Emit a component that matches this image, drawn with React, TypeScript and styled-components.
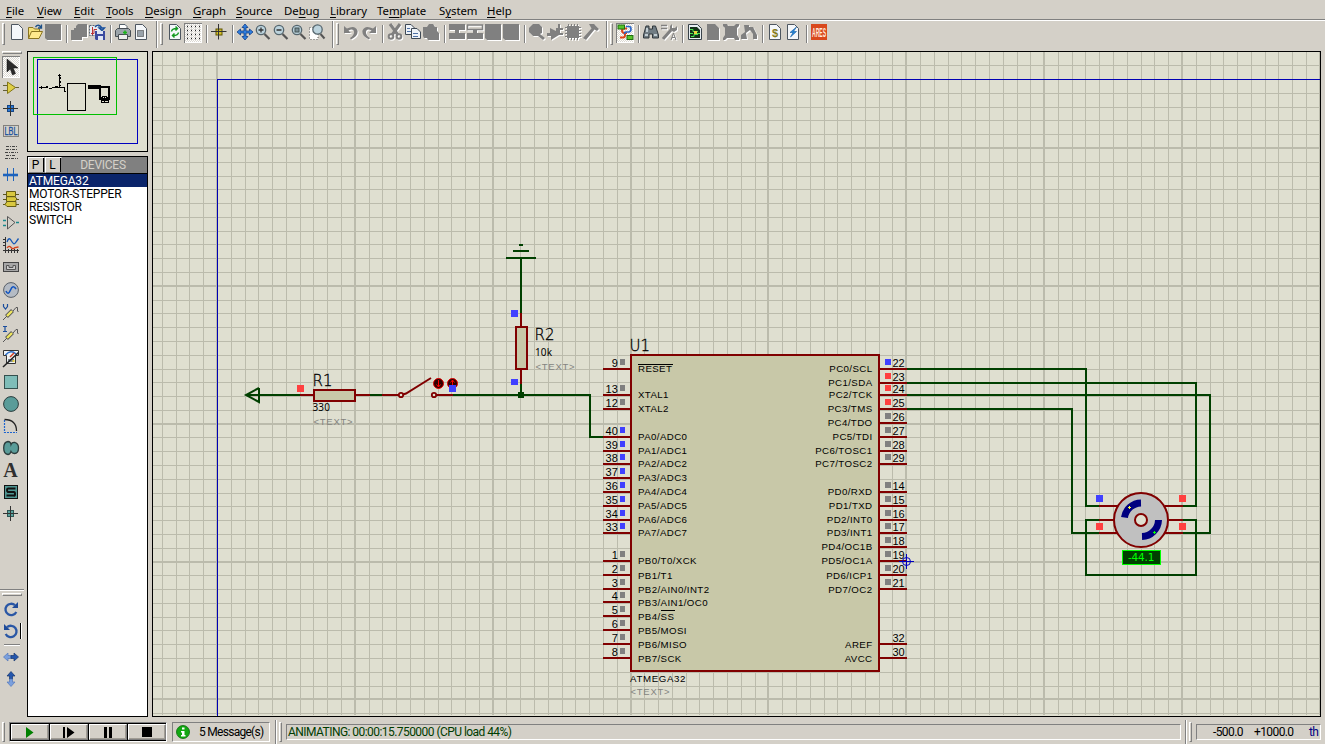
import React from "react";
import styled, { createGlobalStyle } from "styled-components";

const FACE = "#d4d0c8";
const PAPER = "#dfdfd0";
const GRID = "#bbbbac";
const WIRE = "#004000";
const PART = "#800000";
const FRAME = "#0000b4";
const UI = '"Roboto", "Liberation Sans", sans-serif';

const Global = createGlobalStyle`
  * { box-sizing: border-box; }
  body { margin: 0; background: ${FACE}; overflow: hidden; }
`;

const Window = styled.div`
  width: 1325px;
  height: 744px;
  display: grid;
  grid-template-rows: 19px 32px 666px 27px;
  background: ${FACE};
  color: #000;
`;

/* ---------- menu ---------- */

const MenuBar = styled.nav`
  display: flex;
  padding-left: 6px;
  font: 11.4px/22px "Noto Sans", "DejaVu Sans", sans-serif;
  color: #000;
`;
const MenuItem = styled.span<{ $w: number }>`
  width: ${(p) => p.$w}px;
  flex: none;
  white-space: nowrap;
  letter-spacing: -0.05px;
  u { text-underline-offset: 2px; }
`;
const menus: [string, string, string, number][] = [
  ["", "F", "ile", 31], ["", "V", "iew", 37], ["", "E", "dit", 32], ["", "T", "ools", 39],
  ["", "D", "esign", 48], ["", "G", "raph", 43], ["", "S", "ource", 48], ["De", "b", "ug", 46],
  ["", "L", "ibrary", 47], ["Te", "m", "plate", 62], ["S", "y", "stem", 48], ["", "H", "elp", 40],
];

/* ---------- toolbars ---------- */

const TopBar = styled.div`
  display: flex;
  align-items: flex-start;
  border-top: 1px solid #808080;
  box-shadow: inset 0 1px 0 #fff;
  padding-left: 2px;
`;
const Slot = styled.span<{ $on?: boolean }>`
  width: 18px;
  height: 20px;
  margin-top: 3px;
  padding-bottom: 2px;
  flex: none;
  display: flex;
  align-items: center;
  justify-content: center;
  background: ${(p) => (p.$on ? "repeating-conic-gradient(#fff 0 25%, #dcd9d2 0 50%) 0 0 / 2px 2px" : "none")};
  box-shadow: ${(p) => (p.$on ? "inset 1px 1px 0 #808080, inset -1px -1px 0 #fff" : "none")};
`;
const Divider = styled.i`
  width: 2px;
  height: 18px;
  margin: 5px 2px 0 4px;
  flex: none;
  background: linear-gradient(90deg, #808080 50%, #fff 50%);
`;
const BandEnd = styled.i`
  width: 2px;
  height: 27px;
  margin: 1px 2px 0 6px;
  flex: none;
  background: linear-gradient(90deg, #808080 50%, #fff 50%);
`;
const Grip = styled.i<{ $gap: number }>`
  width: 3px;
  height: 22px;
  margin: 3px ${(p) => p.$gap}px 0 0;
  flex: none;
  border: solid;
  border-width: 1px;
  border-color: #fff #808080 #808080 #fff;
`;
const Svg = styled.svg<{ $dim?: boolean }>`
  display: block;
  flex: none;
  filter: ${(p) => (p.$dim ? "drop-shadow(1px 1px 0 #fff)" : "none")};
`;

const G = "#808080";
const page = <path d="M2.500 .5H9.500L13.500 4.500V15.500H2.500Z" fill="#f4f7fa" stroke="#4d5660" />;
const lens = (
  <>
    <path d="M9.500 10L14.500 15" stroke="#555" strokeWidth="2.200" />
    <circle cx="6" cy="6" r="4.700" fill="#bcd3dd" stroke="#56666e" strokeWidth="1.300" />
  </>
);
const probe = (
  <>
    <path d="M0 16L4 12M10 7L13 3.500H14.500V7L15.500 8" fill="none" stroke="#555" />
    <path d="M3.500 12.500L9.500 6.500" stroke="#555" strokeWidth="4" />
    <path d="M4 12L9 7" stroke="#f0e860" strokeWidth="2.400" />
  </>
);

const glyphs: Record<string, React.ReactNode> = {
  new: page,
  open: (
    <>
      <path d="M1.500 14.500V3.500H6L7.500 5H12.500V8" fill="#f6e27a" stroke="#8a7420" />
      <path d="M1.500 14.500L4.500 7.500H15.500L12 14.500Z" fill="#ffe98c" stroke="#8a7420" />
      <path d="M8.500 3Q11 -.5 14 3M14.500 .5V4H11" fill="none" stroke="#1d5087" strokeWidth="1.300" />
    </>
  ),
  block: <path d="M0 0H16V16H2L0 14Z" fill={G} />,
  import: <path d="M5 2L7 0H16V13H11V16H0V6H3V4H5Z" fill={G} />,
  export: (
    <>
      <path d="M.5 1.500H9L12 5V11.500H.500Z" fill="#e7edf3" stroke="#596472" strokeDasharray="2 1" />
      <path d="M2 9.500H5V5.500H8M3.500 3V11" stroke="#b33" fill="none" />
      <path d="M6 3Q10 -1 13 4M10 4H15.500L13 6.500Z" fill="none" stroke="#174e9d" strokeWidth="1.300" />
      <path d="M6 7H16V16H7L6 15Z" fill="#3b4a9f" />
      <path d="M8 7H14V10H8ZM9 12H14V16H9Z" fill="#dfe5f4" />
    </>
  ),
  print: (
    <>
      <path d="M4.500 6V.500H10L12 2.500V6" fill="#fff" stroke="#54606a" />
      <path d="M.5 6.500L2.500 4.500H13.500L15.500 6.500V12.500H.500Z" fill="#9ba4aa" stroke="#484f54" />
      <path d="M3.500 10.500H12.500V15.500H3.500Z" fill="#eee" stroke="#484f54" />
      <path d="M8 8.500H12M10 6.500V10.500" stroke="#19b419" strokeWidth="1.500" />
    </>
  ),
  area: (
    <>
      {page}
      <rect x="4.500" y="6.500" width="6" height="6" fill="#98a2aa" stroke="#333" strokeDasharray="1 1" />
    </>
  ),
  refresh: (
    <>
      {page}
      <path d="M4.500 7.500Q5 4.500 9.500 4.500M8.500 2.500L10.500 4.500L8.500 6.500M11.500 8.500Q11 11.500 6.500 11.500M7.500 9.500L5.500 11.500L7.500 13.500" fill="none" stroke="#149a22" strokeWidth="1.500" />
    </>
  ),
  grid: (
    <path d="M2 2.500H16M2 6.500H16M2 10.500H16M2 14.500H16" stroke="#222" strokeDasharray="1 3" strokeWidth="1.300" />
  ),
  origin: (
    <>
      <rect x="5" y="5" width="6" height="6" fill="#d3bf2a" stroke="#5c5200" />
      <path d="M7.500 0V15.500M0 7.500H15.500" stroke="#333" />
    </>
  ),
  pan: (
    <path
      d="M8 0L11 3.500H9V7H12.500V5L16 8L12.500 11V9H9V12.500H11L8 16L5 12.500H7V9H3.500V11L0 8L3.500 5V7H7V3.500H5Z"
      fill="#2f7fe0" stroke="#133f86" strokeWidth=".8"
    />
  ),
  zin: <>{lens}<path d="M3.500 6H8.500M6 3.500V8.500" stroke="#333" strokeWidth="1.300" /></>,
  zout: <>{lens}<path d="M3.500 6H8.500" stroke="#333" strokeWidth="1.500" /></>,
  zall: <>{lens}<rect x="4" y="4" width="4" height="4" fill="#7b8e97" stroke="#455" /></>,
  zarea: (
    <>
      <path d="M.5 3.500H9V15.500H.500Z" fill="#fff" stroke="#555" strokeDasharray="1 2" />
      <path d="M11.500 10L15.500 14.500" stroke="#555" strokeWidth="2" />
      <circle cx="8.500" cy="5.500" r="4.700" fill="#bcd3dd" stroke="#56666e" strokeWidth="1.300" />
    </>
  ),
  undo: <path d="M1 2V9H8L5.500 6.500Q10 4 11 7.500Q11.500 11 7 14L8 15.500Q15.500 12 14.500 6.500Q12 .500 4 4.500Z" fill={G} />,
  redo: <path d="M15 2V9H8L10.500 6.500Q6 4 5 7.500Q4.500 11 9 14L8 15.500Q.5 12 1.500 6.500Q4 .500 12 4.500Z" fill={G} />,
  cut: (
    <>
      <path d="M3 0L11 11M13 0L5 11" stroke={G} strokeWidth="3" />
      <circle cx="4" cy="12.500" r="2.300" fill="none" stroke={G} strokeWidth="2" />
      <circle cx="12" cy="12.500" r="2.300" fill="none" stroke={G} strokeWidth="2" />
    </>
  ),
  copy: (
    <>
      <path d="M.5 .5H6L9.500 4V10.500H.500Z" fill="#eef3f8" stroke="#3f4954" />
      <path d="M6.500 4.500H12L15.500 8V14.500H6.500Z" fill="#eef3f8" stroke="#3f4954" />
      <path d="M2 4.500H5M2 7.500H6M8 9.500H13M8 12.500H13" stroke="#4d70a5" />
    </>
  ),
  paste: <path d="M0 3H4L6 0H10L12 3H14V7L16 9V16H5L4 14H1L0 12Z" fill={G} />,
  bcopy: <path d="M0 0H16V6H10V9H16V15H0V9H6V6H0Z" fill={G} />,
  bmove: (
    <>
      <path d="M0 9H6V6H10V9H16V15H0Z" fill={G} />
      <path d="M.5 1H15.500V5.500H.500Z" fill="none" stroke={G} strokeWidth="1.500" />
    </>
  ),
  pick: <path d="M4 0H10L13 3V9L11 10L16 14L14 16L9 12H4L0 8V4Z" fill={G} />,
  make: <path d="M0 9H3V4L9 7V4H11V0H13V4H16V6H13V9H16V11H12L4 16V12H0Z" fill={G} />,
  pack: (
    <>
      <rect x="2" y="2" width="12" height="12" fill={G} />
      <path d="M3.500 0V16M6.500 0V16M9.500 0V16M12.500 0V16M0 3.500H16M0 6.500H16M0 9.500H16M0 12.500H16" stroke={G} />
    </>
  ),
  hammer: <path d="M6 0H11L16 5L14 7L11.500 5.500L3 16L0 14L8.500 4.500Z" fill={G} />,
  wire: (
    <>
      <path d="M10 4.500H7Q5 4.500 5 6.500T7 9H10M3 13.500H6Q8 13.500 8 11V8" fill="none" stroke="#e0451c" strokeWidth="2" />
      <path d="M9 2.500H12Q14 2.500 14 5T12 8H9Q7.500 8 7.500 10" fill="none" stroke="#2b66c9" strokeWidth="1.600" />
      <rect x="1" y="1" width="6.500" height="4" fill="#57c62d" stroke="#216d12" />
      <rect x="10" y="11.500" width="6" height="4" fill="#57c62d" stroke="#216d12" />
    </>
  ),
  find: (
    <>
      <path d="M3 2H6V5H9.500V2H12.500L15.500 11V14H9.500V10H6V14H.500V11Z" fill="#707c83" stroke="#30383d" />
      <path d="M2 11H5M11 11H14M4 4V8" stroke="#dbe6ec" strokeWidth="1.500" />
    </>
  ),
  prop: (
    <>
      <path d="M0 1.500H6M0 4.500H6" stroke={G} strokeWidth="1.500" />
      <path d="M2 15L10 6" stroke={G} strokeWidth="3" />
      <path d="M9 6V2L11 0V4H14L16 2V6L13 8Z" fill={G} />
      <path d="M10 16L12.500 9L15 16M11 13.500H14" stroke={G} fill="none" />
    </>
  ),
  sheet: (
    <>
      <path d="M1.500 .5H10.500L14.500 4.500V15.500H1.500Z" fill="#e8eef2" stroke="#39424a" />
      <path d="M3 3H10L13 6V14H3Z" fill="#14301a" />
      <path d="M3 5.500H6V7.500H11M3 9.500H6M10 9.500H13M4 12.500H7V10.500H11" stroke="#49e04e" fill="none" />
      <rect x="7" y="7" width="3" height="3" fill="#ead33f" />
    </>
  ),
  gpage: <path d="M2 0H10L14 4V16H2Z" fill={G} />,
  gx: <path d="M0 0H4L5 2H11L13 0H16V2L14 4V11L16 14V16H12L11 14H4L2 16H0V14L2 11V4L0 2Z" fill={G} />,
  tree: <path d="M3 1H8V3H12L16 11V15H12V10L9 6L5 9L6 15H0V11L4 8Z" fill={G} />,
  bill: page,
  erc: (
    <>
      {page}
      <path d="M11.500 3L5 8.500H8L5.500 13L11.500 7.500H8.500Z" fill="#2589de" stroke="#125b9f" strokeWidth=".6" />
    </>
  ),

  select: <path d="M4 0L4 13L7.300 10L9.500 16L12.500 14.600L10.200 9H15Z" fill="#2a2a2a" stroke="#111" strokeWidth=".5" />,
  gate: (
    <>
      <path d="M0 5.500H4M0 10.500H4M12 7.500H16" stroke="#656038" />
      <path d="M4.500 2L12.500 7.500L4.500 13.500Z" fill="#e0cf45" stroke="#837618" />
    </>
  ),
  junction: (
    <>
      <rect x="4.500" y="4.500" width="6" height="6" fill="#2c79d8" stroke="#174785" />
      <path d="M7.500 0V15M0 7.500H15" stroke="#333" />
    </>
  ),
  label: <rect x=".5" y="2.500" width="15" height="11" fill="none" stroke="#333" strokeDasharray="1 1" />,
  script: <path d="M3 1.500H14M3 4.500H14M2 7.500H15M3 10.500H13M2 13.500H15" stroke="#444" strokeWidth="1.200" strokeDasharray="3 1 1 1" />,
  bus: (
    <>
      <path d="M4.500 1V14M10.500 1V14" stroke="#1d63bd" />
      <path d="M0 8H15" stroke="#1d63bd" strokeWidth="2.600" />
    </>
  ),
  sub: (
    <>
      <path d="M0 3.500H16M0 8.500H16M0 13.500H16" stroke="#5b561e" />
      <path d="M3.500 .5H12.500V5.500H3.500ZM3.500 5.700H12L14 8L12 10.500H3.500ZM4 10.500H13V15.500H4L2 13.500Z" fill="#d9c83f" stroke="#665d14" />
    </>
  ),
  pin: (
    <>
      <path d="M0 5.500H3M0 10.500H3M13 7.500H16" stroke="#17888c" strokeWidth="1.300" />
      <path d="M4.500 1.500L12 7.500L4.500 14Z" fill="none" stroke="#555" />
    </>
  ),
  graph: (
    <>
      <path d="M2.500 0V16M0 13.500H16M0 2.500H3M0 5.500H3M0 8.500H3M5.500 12V16M8.500 12V16M11.500 12V16M14.500 12V16" stroke="#333" />
      <path d="M4 5Q6 -1 8.500 4T13 5L15.500 1.500" fill="none" stroke="#1557b5" strokeWidth="1.300" />
      <path d="M4 11Q6 8 8 10.500T12 10.500L15.500 10" fill="none" stroke="#d3421b" strokeWidth="1.300" />
    </>
  ),
  tape: (
    <>
      <rect x=".5" y="3.500" width="15" height="9" fill="#a7a7a7" stroke="#444" />
      <path d="M3.500 10.500V6.500H6V8.500H10V6.500H12.500V10.500Z" fill="#ccc" stroke="#555" />
    </>
  ),
  gen: (
    <>
      <circle cx="8" cy="8" r="7.400" fill="#b4bbc4" stroke="#596068" />
      <path d="M3 9Q5 14 7.500 8T13 7" fill="none" stroke="#1456c0" strokeWidth="1.600" />
    </>
  ),
  probeV: <>{probe}<path d="M.5 0V2.500L2.500 5L4.500 2.500V0" fill="none" stroke="#1a4d9c" strokeWidth="1.200" /></>,
  probeI: <>{probe}<path d="M0 .5H4M2 .5V5.500M0 5.500H4" fill="none" stroke="#1a4d9c" strokeWidth="1.200" /></>,
  meter: (
    <>
      <path d="M.5 .5H15.500V5.500H12.500V13.500H3.500V5.500H.500Z" fill="#eef2f4" stroke="#333" />
      <path d="M2.500 5Q8 -1 13 4" fill="none" stroke="#2b6ec8" strokeWidth="1.500" />
      <path d="M7 7L11 3" stroke="#d33b1b" strokeWidth="1.500" />
      <path d="M5 9H11V12H5Z" fill="#77858c" />
      <path d="M0 17L15.500 2.500" stroke="#222" strokeWidth="1.600" />
      <rect x="9.500" y="10" width="2" height="2" fill="#e8cf3c" />
    </>
  ),
  box: <rect x="1.500" y="1.500" width="13" height="13" fill="#7fbdb8" stroke="#35504e" />,
  circle: <circle cx="8" cy="8" r="7.400" fill="#5a9c99" stroke="#2c3c3c" />,
  arc: (
    <>
      <path d="M1.500 2V14.500H14" fill="none" stroke="#1e65cf" strokeWidth="1.200" strokeDasharray="2 1" />
      <path d="M1.500 1.500Q13.500 1.500 13.500 13" fill="none" stroke="#222" strokeWidth="1.300" />
    </>
  ),
  blob: <path d="M5 1.500Q7.500 1.500 8 4.500Q9 2 12 2.500Q15.500 3.500 15.500 8Q15.500 13.500 11.500 13.500Q9 13.500 8 11.500Q7 14.500 5 14.500Q.7 14 .7 8Q.7 2 5 1.500Z" fill="#5a9c99" stroke="#2c3c3c" strokeWidth="1.300" />,
  letter: null,
  symbol: (
    <>
      <rect x="1.500" y="1.500" width="13" height="13" fill="#4f9692" stroke="#111" />
      <path d="M12.500 4.500H5Q4 4.500 4 6T5 8H11Q12 8 12 10T11 11.500H3.500" fill="none" stroke="#111" strokeWidth="2" />
    </>
  ),
  marker: (
    <>
      <rect x="4.500" y="4.500" width="6" height="6" fill="#5aa39f" stroke="#2d5654" />
      <path d="M7.500 0V15M0 7.500H15" stroke="#333" />
    </>
  ),
  cw: (
    <>
      <path d="M12 4.200A5.700 5.700 0 1 0 13.300 11" fill="none" stroke="#2a57a5" strokeWidth="2.300" />
      <path d="M9 7H15V1Z" fill="#1f4b99" />
    </>
  ),
  ccw: (
    <>
      <path d="M4 4.200A5.700 5.700 0 1 1 2.700 11" fill="none" stroke="#2a57a5" strokeWidth="2.300" />
      <path d="M7 7H1V1Z" fill="#1f4b99" />
    </>
  ),
  mirH: (
    <>
      <path d="M8 6.500H5V4L.5 8L5 12V9.500H8Z" fill="#7ba0dd" stroke="#5479bb" strokeWidth=".7" />
      <path d="M8 6.500H11V4L15.500 8L11 12V9.500H8Z" fill="#2456ad" stroke="#17366e" strokeWidth=".7" />
    </>
  ),
  mirV: (
    <>
      <path d="M6.500 8V5H4L8 .5L12 5H9.500V8Z" fill="#2456ad" stroke="#17366e" strokeWidth=".7" />
      <path d="M6.500 8V11H4L8 15.500L12 11H9.500V8Z" fill="#7ba0dd" stroke="#5479bb" strokeWidth=".7" />
    </>
  ),
};

const IconText = styled.text<{ $serif?: boolean }>`
  font-family: ${(p) => (p.$serif ? '"Liberation Serif", serif' : '"Liberation Sans", sans-serif')};
`;

const Icon = ({ name, dim }: { name: string; dim?: boolean }) => (
  <Svg width="16" height="16" viewBox="0 0 16 16" $dim={dim} overflow="visible">
    {glyphs[name]}
    {name === "label" && (
      <IconText x="1.500" y="12" fontSize="10.500" textLength="13" lengthAdjust="spacingAndGlyphs" fill="#174f9c" stroke="#174f9c" strokeWidth=".3">LBL</IconText>
    )}
    {name === "bill" && <IconText x="5" y="12.500" fontSize="11" fontWeight="700" fill="#857b18">$</IconText>}
    {name === "letter" && (
      <IconText $serif x="7.500" y="14.500" fontSize="20" fontWeight="700" fill="#2f2f2f" textAnchor="middle">A</IconText>
    )}
    {name === "ares" && (
      <>
        <rect width="16" height="16" fill="#d9481c" />
        <IconText x="1" y="12.500" fontSize="13" fontWeight="700" textLength="14" lengthAdjust="spacingAndGlyphs" fill="#ffe9dc">ARES</IconText>
      </>
    )}
  </Svg>
);

const topItems =
  "new open -block | -import export | print area # refresh +grid | origin | pan zin zout zall zarea # -undo -redo | -cut copy -paste | -bcopy -bmove -block -block | -pick -make -pack -hammer # +wire | find -prop | sheet -gpage -gx -tree | bill erc | ares".split(" ");

const Main = styled.main`
  display: grid;
  grid-template-columns: 27px 121px 1173px;
`;
const Side = styled.aside`
  display: flex;
  flex-direction: column;
  justify-content: space-between;
  height: 639px;
`;
const SideGroup = styled.div<{ $line?: boolean }>`
  width: 24px;
  display: flex;
  flex-direction: column;
  align-items: flex-start;
  padding: ${(p) => (p.$line ? "3px" : "0")} 0 0 2px;
  border-top: ${(p) => (p.$line ? "1px solid #808080" : "0")};
  box-shadow: ${(p) => (p.$line ? "inset 0 1px 0 #fff" : "none")};
`;
const SideGrip = styled.i`
  width: 20px;
  height: 3px;
  flex: none;
  border: 1px solid;
  border-color: #fff #808080 #808080 #fff;
`;
const Tool = styled.span<{ $gap: number; $on?: boolean }>`
  width: 18px;
  height: 22px;
  margin-top: ${(p) => p.$gap}px;
  flex: none;
  display: flex;
  align-items: center;
  justify-content: center;
  background: ${(p) => (p.$on ? "repeating-conic-gradient(#fff 0 25%, #dcd9d2 0 50%) 0 0 / 2px 2px" : "none")};
  box-shadow: ${(p) => (p.$on ? "inset 1px 1px 0 #808080, inset -1px -1px 0 #fff" : "none")};
`;
const AngleRow = styled.div`
  display: flex;
  align-items: center;
`;
const AngleEdge = styled.i`
  width: 2px;
  height: 16px;
  border-left: 1px solid #000;
  border-right: 1px solid #fff;
`;
const SideRule = styled.i`
  width: 16px;
  height: 2px;
  margin: 2px 0 0 2px;
  background: linear-gradient(#808080 50%, #fff 50%);
`;
const sideTools: [string, number][] = [
  ["select", 2], ["gate", -1], ["junction", -1], ["label", 0], ["script", 0], ["bus", 0], ["sub", 2],
  ["pin", 2], ["graph", 0], ["tape", 0], ["gen", 1], ["probeV", 0], ["probeI", 0], ["meter", 2],
  ["box", 2], ["circle", 0], ["arc", 0], ["blob", 0], ["letter", 0], ["symbol", 0], ["marker", 0],
];

/* ---------- left panel ---------- */

const Panel = styled.section`
  display: grid;
  grid-template-rows: 101px 561px;
  row-gap: 4px;
`;
const Overview = styled.div`
  border: 1px solid #000;
  background: ${PAPER};
`;
const Devices = styled.div`
  border: 1px solid #000;
  background: #fff;
  font: 12px/13px ${UI};
`;
const DevHead = styled.div`
  display: flex;
  height: 17px;
  border-bottom: 1px solid #000;
`;
const DevButton = styled.button`
  width: 17px;
  height: 16px;
  padding: 0 2px 0 0;
  flex: none;
  background: ${FACE};
  border: 1px solid;
  border-color: #fff #808080 #808080 #fff;
  box-shadow: inset -1px 0 0 #000;
  font: 12px/15px ${UI};
  color: #000;
`;
const DevTitle = styled.div`
  flex: 1;
  padding-right: 3px;
  background: #808080;
  color: ${FACE};
  text-align: center;
  line-height: 17px;
  letter-spacing: -0.25px;
`;
const Row = styled.div<{ $sel?: boolean }>`
  height: 13px;
  padding-left: 1px;
  line-height: 15px;
  letter-spacing: -0.2px;
  background: ${(p) => (p.$sel ? "#0a246a" : "transparent")};
  color: ${(p) => (p.$sel ? "#fff" : "#000")};
`;

/* ---------- schematic ---------- */

const Sheet = styled.div`
  margin-left: 4px;
  border: 1px solid #000;
  background: ${PAPER};
  overflow: hidden;
`;
const Lbl = styled.text<{ $wide?: boolean }>`
  font: 9.700px "Liberation Sans", sans-serif;
  letter-spacing: ${(p) => (p.$wide ? 0.65 : 0.4)}px;
  fill: #000;
`;
const PinNo = styled.text`
  font: 11px "Liberation Sans", sans-serif;
  fill: #000;
`;
const Ref = styled.text`
  font: 200 15px "DejaVu Sans Light", "DejaVu Sans", sans-serif;
  fill: #000;
  stroke: #000;
  stroke-width: 0.3px;
`;
const Val = styled.text<{ $lit?: boolean }>`
  font: ${(p) => (p.$lit ? '10.5px "DejaVu Sans"' : '10px "Noto Sans"')}, sans-serif;
  letter-spacing: ${(p) => (p.$lit ? -0.2 : 0.15)}px;
  fill: ${(p) => (p.$lit ? "#00ff00" : "#000")};
`;
const Hint = styled.text`
  font: 9.500px "Liberation Sans", sans-serif;
  letter-spacing: 0.75px;
  fill: #848480;
`;

const BLUE = "#4040ff";
const RED = "#ff4040";
const NONE = "#808080";
type Pin = [number, string, number, string?];
const leftPins: Pin[] = [
  [9, "RESET", 369, NONE], [13, "XTAL1", 395, NONE], [12, "XTAL2", 409, NONE],
  [40, "PA0/ADC0", 437, BLUE], [39, "PA1/ADC1", 451, BLUE], [38, "PA2/ADC2", 464, BLUE], [37, "PA3/ADC3", 478, BLUE],
  [36, "PA4/ADC4", 492, BLUE], [35, "PA5/ADC5", 506, BLUE], [34, "PA6/ADC6", 520, BLUE], [33, "PA7/ADC7", 533, BLUE],
  [1, "PB0/T0/XCK", 561, NONE], [2, "PB1/T1", 575, NONE], [3, "PB2/AIN0/INT2", 589, NONE], [4, "PB3/AIN1/OC0", 602, NONE],
  [5, "PB4/SS", 616, NONE], [6, "PB5/MOSI", 630, NONE], [7, "PB6/MISO", 644, NONE], [8, "PB7/SCK", 658, NONE],
];
const rightPins: Pin[] = [
  [22, "PC0/SCL", 369, BLUE], [23, "PC1/SDA", 383, RED], [24, "PC2/TCK", 395, RED], [25, "PC3/TMS", 409, RED],
  [26, "PC4/TDO", 423, NONE], [27, "PC5/TDI", 437, NONE], [28, "PC6/TOSC1", 451, NONE], [29, "PC7/TOSC2", 464, NONE],
  [14, "PD0/RXD", 492, NONE], [15, "PD1/TXD", 506, NONE], [16, "PD2/INT0", 520, NONE], [17, "PD3/INT1", 533, NONE],
  [18, "PD4/OC1B", 547, NONE], [19, "PD5/OC1A", 561, NONE], [20, "PD6/ICP1", 575, NONE], [21, "PD7/OC2", 589, NONE],
  [32, "AREF", 644], [30, "AVCC", 658],
];
const labelY = (y: number) => y + (y > 561 ? 4 : 3);

const STEP = 13.785;
const cols = Array.from({ length: 85 }, (_, i) => i - 4);
const rows = Array.from({ length: 48 }, (_, i) => i - 6);

const Sq = ({ x, y, c }: { x: number; y: number; c: string }) => <rect x={x} y={y} width="7" height="7" fill={c} />;

const Schematic = () => (
  <Svg width="1167" height="664" viewBox="153 52 1167 664" shapeRendering="crispEdges">
    {cols.map((k) => {
      const major = k % 10 === 0;
      return <rect key={k} x={Math.round(217 + k * STEP) - (major ? 1 : 0)} y="52" width={major ? 2 : 1} height="663" fill={GRID} />;
    })}
    {rows.map((k) => {
      const major = k % 10 === 0;
      return <rect key={k} x="153" y={Math.round(148 + k * STEP) - (major ? 1 : 0)} width="1166" height={major ? 2 : 1} fill={GRID} />;
    })}
    <path d="M1320 79.500H217.500V716" fill="none" stroke={FRAME} />

    <g fill="none" stroke={WIRE} strokeWidth="2">
      <path d="M259 388V402L246 395L259 388M246 395H300M370 395H382M453 395H590V437H603" shapeRendering="geometricPrecision" />
      <path d="M519 245H523M513 251H529M506 258H536M521 258V313M521 384V395" />
      <path d="M907 369H1086V506H1099M907 383H1196V506H1183M907 395H1210V533H1183M907 409H1072V533H1099M1099 520H1086V575H1196V520H1183" />
    </g>
    <rect x="518" y="392" width="6" height="6" fill={WIRE} />
    <g fill="none" stroke={PART} strokeWidth="2">
      <path d="M300 395H313M356 395H370M382 395H399M436 395H453M521 313V326M521 370V384" />
      <path d="M1099 506H1118M1099 520H1114M1099 533H1118M1165 506H1183M1169 520H1183M1165 533H1183" />
      <rect x="314" y="390" width="41" height="11" fill="#c8c8a8" />
      <rect x="516" y="327" width="11" height="42" fill="#c8c8a8" />
      <g shapeRendering="auto">
        <circle cx="401" cy="395" r="2.200" strokeWidth="1.800" />
        <circle cx="434" cy="395" r="2.200" strokeWidth="1.800" />
        <path d="M403 394.500L406 393.500L431 378" />
      </g>
    </g>
    {[438.5, 452.500].map((x, i) => (
      <g key={x} shapeRendering="auto">
        <circle cx={x} cy="383.500" r="5" fill="#300000" stroke="#e00000" />
        <path d={i ? `M${x} 387V380M${x - 2} 382.500L${x} 380L${x + 2} 382.500` : `M${x} 380V387M${x - 2} 384.500L${x} 387L${x + 2} 384.500`} stroke="#ff0000" strokeWidth="1" fill="none" />
      </g>
    ))}
    <Sq x={297} y={385} c={RED} />
    <Sq x={449} y={385} c={BLUE} />
    <Sq x={511} y={310} c={BLUE} />
    <rect x="511" y="379" width="7" height="6" fill={BLUE} />
    <Ref x="312.500" y="386">R1</Ref>
    <Val x="312.500" y="411">330</Val>
    <Hint x="313.500" y="425">&lt;TEXT&gt;</Hint>
    <Ref x="534.500" y="340">R2</Ref>
    <Val x="535" y="356">10k</Val>
    <Hint x="535.500" y="370">&lt;TEXT&gt;</Hint>

    <rect x="631" y="355" width="248" height="316" fill="#c8c8a8" stroke={PART} strokeWidth="2" />
    <Ref x="629.500" y="351">U1</Ref>
    <Lbl $wide x="630" y="682">ATMEGA32</Lbl>
    <Hint x="630.500" y="695">&lt;TEXT&gt;</Hint>
    {leftPins.map(([n, name, y, c]) => (
      <g key={n}>
        <path d={`M603 ${y}H630`} stroke={PART} strokeWidth="2" />
        <rect x="620" y={y - 10} width="5" height="6" fill={c} />
        <PinNo x="617.800" y={y - 2} textAnchor="end">{n}</PinNo>
        <Lbl x="638" y={labelY(y)}>{name}</Lbl>
      </g>
    ))}
    <path d="M638 364.500H673M661 610.500H675" stroke="#000" />
    {rightPins.map(([n, name, y, c]) => (
      <g key={n}>
        <path d={`M880 ${y}H907`} stroke={PART} strokeWidth="2" />
        {c && <rect x="885" y={y - 10} width="6" height="6" fill={c} />}
        <PinNo x="892.500" y={y - 2}>{n}</PinNo>
        <Lbl x="872.500" y={labelY(y)} textAnchor="end">{name}</Lbl>
      </g>
    ))}
    <g stroke="#0000c0" fill="none" shapeRendering="auto">
      <path d="M906.500 554V569M899 561.500H914" />
      <circle cx="906.500" cy="561.500" r="4" />
    </g>

    <g shapeRendering="auto">
      <circle cx="1141" cy="520" r="27" fill="#c0c0c0" stroke={PART} strokeWidth="2" />
      <g fill="none" stroke="#000080" strokeWidth="7">
        <path d="M1124.500 517.500A17 17 0 0 1 1141 503" />
        <path d="M1158.500 520A17 17 0 0 1 1142 536.500" />
      </g>
      <circle cx="1141" cy="520" r="6" fill={PAPER} stroke={PART} strokeWidth="2" />
    </g>
    <path d="M1128 507.500H1131M1129.500 506V509" stroke="#ffff40" />
    <path d="M1153 532.500H1156M1154.500 531V534" stroke="#00ff00" />
    <rect x="1122.500" y="550.500" width="38" height="14" fill={WIRE} stroke="#00ff00" />
    <Val $lit x="1128" y="560.500">-44.1</Val>
    <Sq x={1096} y={495} c={BLUE} />
    <Sq x={1096} y={523} c={RED} />
    <Sq x={1179} y={495} c={RED} />
    <Sq x={1179} y={523} c={RED} />
  </Svg>
);

/* ---------- status bar ---------- */

const Status = styled.footer`
  display: flex;
  align-items: flex-start;
  padding: 5px 4px 0 2px;
  font: 12px/15px ${UI};
`;
const StatusGrip = styled(Grip)`
  height: 20px;
  margin-top: 0;
`;
const StatusEnd = styled(BandEnd)<{ $before?: number }>`
  height: 24px;
  margin: -2px 2px 0 ${(p) => p.$before ?? 0}px;
`;
const Transport = styled.div`
  display: flex;
  width: 158px;
  height: 20px;
  margin-right: 5px;
  padding: 1px 0 0 1px;
  background: #000;
  border: 1px solid;
  border-color: #808080 #fff #fff #808080;
`;
const Play = styled.button`
  width: 38px;
  height: 16px;
  margin-right: 1px;
  padding: 0;
  flex: none;
  display: flex;
  align-items: center;
  justify-content: center;
  background: ${FACE};
  border: 1px solid;
  border-color: #fff #808080 #808080 #fff;
  box-shadow: inset -1px -1px 0 #a09c94;
`;
const Messages = styled.div`
  width: 98px;
  height: 20px;
  margin-right: 5px;
  padding: 1px 3px;
  display: flex;
  flex: none;
  gap: 9px;
  align-items: center;
  border: 1px solid;
  border-color: #808080 #fff #fff #808080;
  white-space: nowrap;
  letter-spacing: -0.72px;
`;
const MessageText = styled.span`
  padding-top: 1px;
`;
const Field = styled.div<{ $w: number }>`
  width: ${(p) => p.$w}px;
  height: 16px;
  margin-top: 2px;
  padding-left: 1px;
  flex: none;
  border: 1px solid;
  border-color: #808080 #fff #fff #808080;
  color: #003c00;
  line-height: 14px;
  letter-spacing: -0.55px;
  white-space: nowrap;
`;
const Coords = styled(Field)`
  display: flex;
  padding-left: 16px;
  color: #000;
  letter-spacing: -0.6px;
`;
const Coord = styled.span<{ $w: number; $blue?: boolean }>`
  width: ${(p) => p.$w}px;
  color: ${(p) => (p.$blue ? "#000080" : "#000")};
`;

export default function App() {
  return (
    <Window>
      <Global />
      <MenuBar>
        {menus.map(([a, k, b, w]) => (
          <MenuItem key={a + k + b} $w={w}>{a}<u>{k}</u>{b}</MenuItem>
        ))}
      </MenuBar>
      <TopBar>
        <Grip $gap={3} />
        {topItems.map((t, i) => {
          if (t === "|") return <Divider key={i} />;
          if (t === "#") return <React.Fragment key={i}><BandEnd /><Grip $gap={3} /></React.Fragment>;
          const on = t[0] === "+";
          const dim = t[0] === "-";
          return <Slot key={i} $on={on}><Icon name={on || dim ? t.slice(1) : t} dim={dim} /></Slot>;
        })}
      </TopBar>
      <Main>
        <Side>
          <SideGroup>
            <SideGrip />
            {sideTools.map(([n, g]) => <Tool key={n} $gap={g} $on={n === "select"}><Icon name={n} /></Tool>)}
          </SideGroup>
          <SideGroup $line>
            <SideGrip />
            <Tool $gap={2}><Icon name="cw" /></Tool>
            <AngleRow><Tool $gap={0}><Icon name="ccw" /></Tool><AngleEdge /></AngleRow>
            <SideRule />
            <Tool $gap={0}><Icon name="mirH" /></Tool>
            <Tool $gap={0}><Icon name="mirV" /></Tool>
          </SideGroup>
        </Side>
        <Panel>
          <Overview>
            <Svg width="119" height="99" viewBox="28 52 119 99" shapeRendering="crispEdges">
              <g fill="none">
                <rect x="37.500" y="59.500" width="100" height="84" stroke="#0000c0" />
                <rect x="33.500" y="57.500" width="83" height="57" stroke="#00c000" />
                <rect x="67.500" y="83.500" width="18" height="27" stroke="#000" />
                <path d="M39 87.500H48M49 88.500H52M52 87.500H64M59.500 74V87M58 75.500H61M64.500 87V91M64 91.500H66M41.500 86V89M46 86.500H48M55 86.500H58" stroke="#000" />
                <path d="M60 77V86" stroke="#000" strokeWidth="2" strokeDasharray="2 2" />
                <path d="M88 87H101M100 87H109V99H100Z" stroke="#000" strokeWidth="2" />
                <path d="M88 87H101" stroke="#000" strokeWidth="4" />
                <path d="M101 98.500L103 96.500H106L108 98.500V102.500H101ZM102 100.500H108M104.500 96V102" stroke="#000" />
              </g>
            </Svg>
          </Overview>
          <Devices>
            <DevHead>
              <DevButton>P</DevButton>
              <DevButton>L</DevButton>
              <DevTitle>DEVICES</DevTitle>
            </DevHead>
            <Row $sel>ATMEGA32</Row>
            <Row>MOTOR-STEPPER</Row>
            <Row>RESISTOR</Row>
            <Row>SWITCH</Row>
          </Devices>
        </Panel>
        <Sheet><Schematic /></Sheet>
      </Main>
      <Status>
        <StatusGrip $gap={4} />
        <Transport>
          <Play><Svg width="8" height="11"><path d="M0 0L7.500 5.500L0 11Z" fill="#008000" /></Svg></Play>
          <Play><Svg width="12" height="11"><path d="M0 0H2V11H0ZM4 0L11.500 5.500L4 11Z" /></Svg></Play>
          <Play><Svg width="8" height="11"><path d="M0 0H3V11H0ZM5 0H8V11H5Z" /></Svg></Play>
          <Play><Svg width="10" height="10"><path d="M0 0H10V10H0Z" /></Svg></Play>
        </Transport>
        <Messages>
          <Svg width="14" height="14">
            <circle cx="7" cy="7" r="6.500" fill="#12a812" stroke="#0a6a0a" strokeWidth=".8" />
            <path d="M6 2.500H8.500V4.500H6ZM5 6H8.500V10H9.500V11.500H5V10H6V7.500H5Z" fill="#fff" />
          </Svg>
          <MessageText>5 Message(s)</MessageText>
        </Messages>
        <StatusEnd />
        <StatusGrip $gap={4} />
        <Field $w={895}>ANIMATING: 00:00:15.750000 (CPU load 44%)</Field>
        <StatusEnd $before={4} />
        <StatusGrip $gap={4} />
        <Coords $w={125}>
          <Coord $w={41}>-500.0</Coord>
          <Coord $w={55}>+1000.0</Coord>
          <Coord $w={10} $blue>th</Coord>
        </Coords>
      </Status>
    </Window>
  );
}
